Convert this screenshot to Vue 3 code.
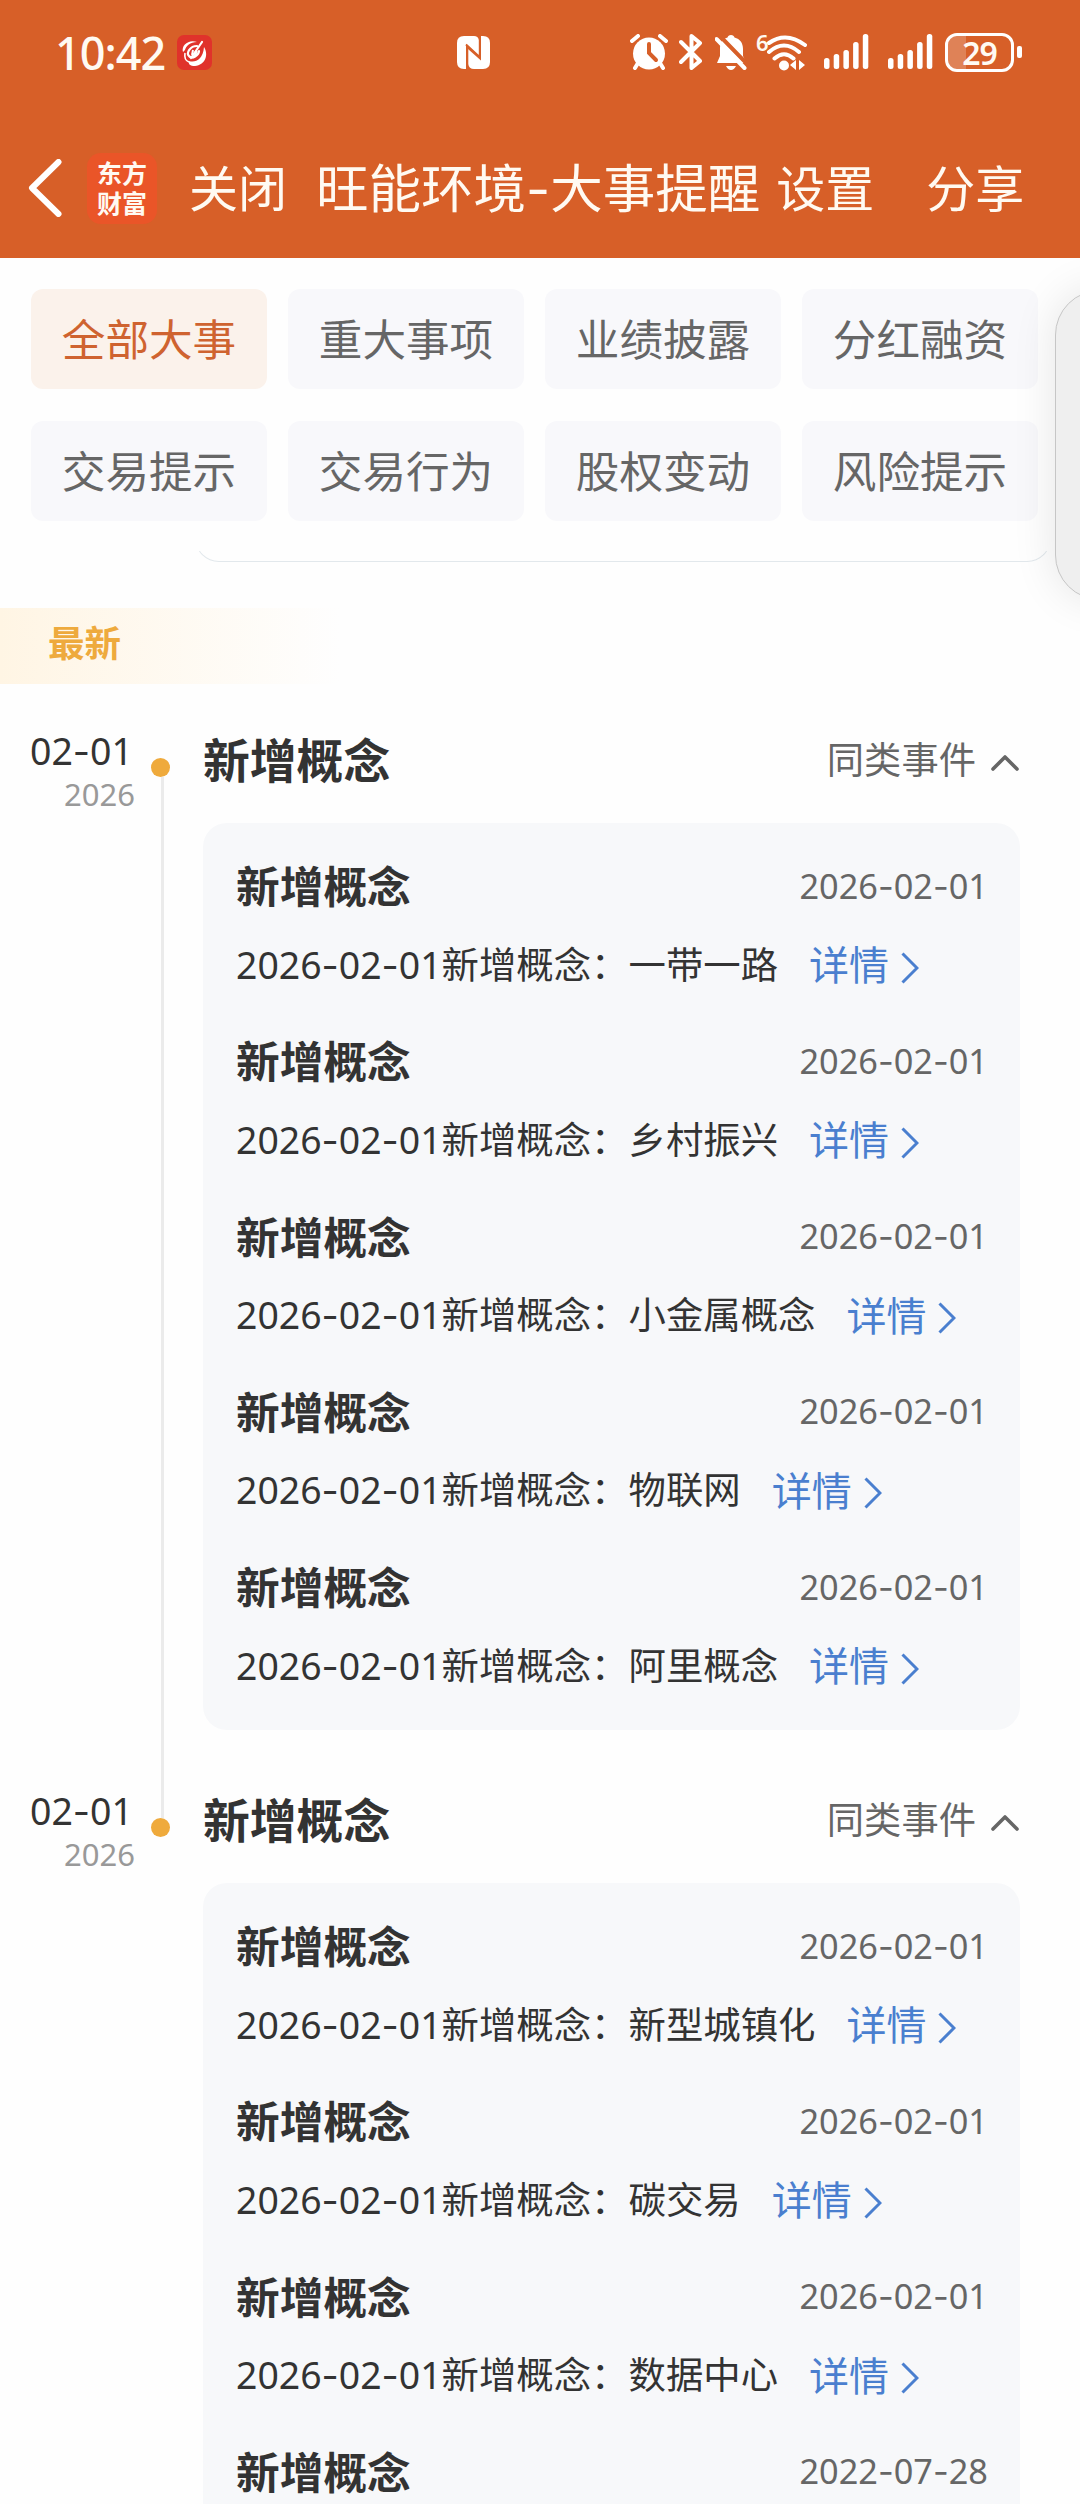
<template>
    <div class="screen">
        <header>
            <div class="status-bar">
                <span class="clock">10:42</span>
                <svg class="app-badge" viewBox="0 0 35 35">
                    <rect width="35" height="35" rx="7" fill="#e0322b" />
                    <path d="M6 17C4 10 12 4 20 7C13 7 9 11 8 15Z" fill="#fff" />
                    <path d="M27 12C32 20 28 30 18 31C13 31 11 29 12 26C18 28 26 25 27 12Z" fill="#fff" />
                    <path d="M8 18C7 24 9 26 12 27" fill="none" stroke="#fff" stroke-width="1.6" />
                    <path d="M25 7L14 23M20 11C13 11 9 18 12 21C15 25 22 20 22 16" fill="none" stroke="#fff" stroke-width="2.2" stroke-linecap="round" />
                    <path d="M16 15L15 20M20 16L17 22" fill="none" stroke="#fff" stroke-width="2" />
                </svg>
                <svg class="nfc" viewBox="0 0 33 33">
                    <path d="M7 0H9V33H7Q0 33 0 26V7Q0 0 7 0Z" />
                    <path d="M26 0H24V33H26Q33 33 33 26V7Q33 0 26 0Z" />
                    <path d="M8.500 0H17Q21 0 22 4V20L9 8Z" />
                    <path d="M11 13L24.500 25V33H17Q12 33 11 28Z" />
                    <path d="M9 8.500L22 20.500M10.300 11V33M22.800 0V22" class="nfc-gap" />
                </svg>
                <div class="status-icons">
                    <svg class="alarm" viewBox="0 0 38 36">
                        <circle cx="19" cy="19.500" r="16" />
                        <path d="M2 7L8 2M36 7L30 2" class="line" />
                        <path d="M8 29L5 34M30 29L33 34" class="line" />
                        <path d="M19 10V19L26 26" class="cut" />
                    </svg>
                    <svg class="bluetooth" viewBox="0 0 24 38">
                        <path d="M2 9L21 28L12.500 35V3L21 10L2 29" class="line" />
                    </svg>
                    <svg class="bell" viewBox="0 0 32 37">
                        <path d="M16 1C18 1 19 2 19.500 3.500C25 5 28 9 28 15V22L31 29H2L5 22V13C6 7 9 4.500 12.500 3.500C13 2 14 1 16 1Z" />
                        <path d="M11 32H21Q19 36 16 36Q13 36 11 32Z" />
                        <path d="M4 1L34 32" class="cut" />
                        <path d="M1.500 5L29.500 34" class="line" />
                    </svg>
                    <div class="wifi">
                        <span class="wifi-gen">6</span>
                        <svg viewBox="0 0 40 37">
                            <circle cx="17" cy="31.500" r="5" />
                            <path d="M2 9Q19 -3 38 11M2 18Q17 5 32 18M7.500 24.500Q17 16 26.500 24.500" class="line" />
                            <path d="M29 26V36L23 31ZM32 26V36L38 31Z" />
                        </svg>
                    </div>
                    <svg v-for="n in 2" :key="n" class="signal" viewBox="0 0 45 36">
                        <rect v-for="bar in signalBars" :key="bar.x" :x="bar.x" :y="35 - bar.h" width="5.500" :height="bar.h" rx="2.500" />
                    </svg>
                    <div class="battery">
                        <div class="battery-body">
                            <div class="battery-fill"></div>
                            <span class="battery-level">29</span>
                        </div>
                        <div class="battery-cap"></div>
                    </div>
                </div>
            </div>
            <nav>
                <svg class="back" viewBox="0 0 34 58">
                    <path d="M30.500 3L4 29L30.500 55" />
                </svg>
                <div class="logo"><span>东方</span><span>财富</span></div>
                <a class="close">关闭</a>
                <h1>旺能环境<i class="dash">-</i>大事提醒</h1>
                <a class="settings">设置</a>
                <a class="share">分享</a>
            </nav>
        </header>

        <div class="tabs">
            <button
                v-for="tab in tabs"
                :key="tab"
                :class="{ active: activeTab === tab }"
                @click="activeTab = tab"
            >
                {{ tab }}
            </button>
        </div>
        <div class="panel-edge"><div class="panel-outline"></div></div>

        <div class="latest">最新</div>

        <main>
            <section v-for="(group, g) in groups" :key="g">
                <div class="when">
                    <div class="day"><DateText value="02-01" /></div>
                    <div class="year">2026</div>
                </div>
                <div class="track">
                    <div class="dot"></div>
                    <div v-if="g < groups.length - 1" class="rail"></div>
                </div>
                <div class="event">
                    <div class="event-head" @click="group.open = !group.open">
                        <h2>新增概念</h2>
                        <span class="similar">同类事件</span>
                        <svg class="arrow-up" :class="{ closed: !group.open }" viewBox="0 0 30 18">
                            <path d="M3 15L15 3L27 15" />
                        </svg>
                    </div>
                    <div v-show="group.open" class="card">
                        <article v-for="(item, i) in group.items" :key="i">
                            <div class="item-head">
                                <h3>新增概念</h3>
                                <DateText class="item-date" :value="item.date" />
                            </div>
                            <p v-if="item.concept">
                                <span><DateText :value="item.date" />新增概念：{{ item.concept }}</span>
                                <a class="detail">详情</a>
                                <svg class="arrow-right" viewBox="0 0 18 32">
                                    <path d="M1.500 1.500L16 16L1.500 30.500" />
                                </svg>
                            </p>
                        </article>
                    </div>
                </div>
            </section>
        </main>

        <div class="side-handle"></div>
    </div>
</template>

<script setup>
import { ref, h } from 'vue';

const tabs = ['全部大事', '重大事项', '业绩披露', '分红融资', '交易提示', '交易行为', '股权变动', '风险提示'];
const activeTab = ref('全部大事');

const signalBars = [
    { x: 0, h: 11 },
    { x: 9.7, h: 15 },
    { x: 19.4, h: 19 },
    { x: 29.1, h: 27 },
    { x: 38.8, h: 35 }
];

const groups = ref([
    {
        open: true,
        items: [
            { date: '2026-02-01', concept: '一带一路' },
            { date: '2026-02-01', concept: '乡村振兴' },
            { date: '2026-02-01', concept: '小金属概念' },
            { date: '2026-02-01', concept: '物联网' },
            { date: '2026-02-01', concept: '阿里概念' }
        ]
    },
    {
        open: true,
        items: [
            { date: '2026-02-01', concept: '新型城镇化' },
            { date: '2026-02-01', concept: '碳交易' },
            { date: '2026-02-01', concept: '数据中心' },
            { date: '2022-07-28', concept: '' }
        ]
    }
]);

// Dates use a wider dash than the digits' own font has
const DateText = (props) => {
    const parts = props.value.split('-');
    return h('span', parts.flatMap((part, i) => (i ? [h('i', { class: 'dash' }, '-'), part] : [part])));
};
DateText.props = ['value'];
</script>

<style>
body {
    background: #fff;
}

.dash {
    font-family: Inter, sans-serif;
    font-style: normal;
    font-weight: 400;
}
</style>

<style scoped>
.screen {
    position: relative;
    width: 1080px;
    height: 2504px;
    overflow: hidden;
    background: #fefefe;
    color: #333;
    font-family: "Noto Sans", "Noto Sans CJK SC", sans-serif;
}

h1, h2, h3, p {
    margin: 0;
}

svg {
    display: block;
    flex: none;
    fill: #fff;
}

header {
    height: 258px;
    background: #d75f28;
    color: #fffaf2;
}

.status-bar {
    display: flex;
    align-items: center;
    height: 104px;
    padding: 0 58px 0 55px;
}

.clock {
    width: 122px;
    font-size: 45px;
    font-weight: 500;
    letter-spacing: -1px;
    white-space: nowrap;
}

.app-badge {
    width: 35px;
    height: 35px;
}

.nfc {
    width: 33px;
    height: 33px;
    margin-left: 245px;
}

.nfc-gap {
    fill: none;
    stroke: #d75f28;
    stroke-width: 2;
}

.line {
    fill: none;
    stroke: #fff;
    stroke-width: 4;
    stroke-linecap: round;
    stroke-linejoin: round;
}

.cut {
    fill: none;
    stroke: #d75f28;
    stroke-width: 4;
    stroke-linecap: round;
}

.status-icons {
    display: flex;
    align-items: center;
    margin-left: auto;
}

.alarm {
    width: 38px;
    height: 36px;
}

.bluetooth {
    width: 24px;
    height: 38px;
    margin-left: 11px;
}

.bell {
    width: 32px;
    height: 37px;
    margin-left: 12px;
}

.wifi {
    display: flex;
    align-items: flex-start;
    width: 51px;
    height: 37px;
    margin-left: 9px;
}

.wifi svg {
    width: 40px;
    height: 37px;
}

.wifi-gen {
    width: 11px;
    font-size: 22px;
    line-height: 16px;
    font-weight: 600;
}

.signal {
    width: 45px;
    height: 36px;
    margin-left: 17px;
}

.signal + .signal {
    margin-left: 19px;
}

.battery {
    display: flex;
    align-items: center;
    gap: 3px;
    margin-left: 12px;
}

.battery-body {
    position: relative;
    box-sizing: border-box;
    width: 69px;
    height: 39px;
    border: 3px solid #fff;
    border-radius: 12px;
    overflow: hidden;
    text-align: center;
}

.battery-fill {
    position: absolute;
    left: 0;
    top: 0;
    width: 29%;
    height: 100%;
    background: rgba(255, 255, 255, 0.22);
}

.battery-level {
    position: relative;
    display: block;
    font-size: 32px;
    line-height: 33px;
    font-weight: 600;
    letter-spacing: -1px;
}

.battery-cap {
    width: 5px;
    height: 12px;
    border-radius: 2px;
    background: #fff;
}

nav {
    display: flex;
    align-items: center;
    height: 154px;
    box-sizing: border-box;
    padding: 14px 0 0 28px;
    font-size: 49px;
    line-height: 72px;
    white-space: nowrap;
}

.back {
    width: 34px;
    height: 58px;
}

.back path {
    fill: none;
    stroke: #fff;
    stroke-width: 6;
    stroke-linecap: round;
    stroke-linejoin: round;
}

.logo {
    display: flex;
    flex-direction: column;
    align-items: center;
    justify-content: center;
    width: 70px;
    height: 71px;
    margin-left: 25px;
    border-radius: 14px;
    background: #ea5528;
    font-size: 25px;
    line-height: 30px;
    font-weight: 700;
}

.close {
    margin-left: 32px;
}

h1 {
    margin-left: 29px;
    font-size: 52.5px;
    font-weight: 400;
}

.settings {
    margin-left: 16px;
}

.share {
    margin-left: 52px;
}

.tabs {
    display: grid;
    grid-template-columns: repeat(4, 236px);
    gap: 32px 21px;
    padding: 31px 0 0 31px;
}

.tabs button {
    height: 100px;
    padding: 0 0 4px;
    border: 0;
    border-radius: 12px;
    background: #f8f8fb;
    color: #666;
    font-family: inherit;
    font-size: 43.6px;
    cursor: pointer;
}

.tabs button.active {
    background: #fbf2eb;
    color: #cf6330;
}

/* Only the lower rim of the filter panel is visible */
.panel-edge {
    display: flex;
    align-items: flex-end;
    width: 856px;
    height: 11px;
    margin: 30px 0 0 195px;
    overflow: hidden;
}

.panel-outline {
    flex: 1;
    height: 60px;
    border-bottom: 1px solid #e2e8ec;
    border-left: 1px solid #e2e8ec;
    border-right: 1px solid #e2e8ec;
    border-radius: 0 0 24px 24px;
}

.latest {
    height: 76px;
    margin-top: 46px;
    padding-left: 48px;
    background: linear-gradient(to right, #fff5e4, #fefefe 340px);
    color: #eeaa3d;
    font-size: 36.5px;
    line-height: 71px;
    font-weight: 700;
}

main {
    padding: 46px 60px 0 0;
}

section {
    display: flex;
    height: 1060px;
}

.when {
    width: 135px;
    text-align: right;
    white-space: nowrap;
}

.day {
    padding-right: 2px;
    font-size: 37.5px;
    line-height: 42px;
}

.year {
    color: #999;
    font-size: 31px;
    line-height: 42px;
}

.track {
    display: flex;
    flex-direction: column;
    align-items: center;
    width: 19px;
    margin: 28px 33px 0 16px;
}

.dot {
    flex: none;
    width: 19px;
    height: 19px;
    border-radius: 50%;
    background: #efaa3c;
}

.rail {
    flex: none;
    width: 3px;
    height: 1041px;
    margin-left: 3px;
    background: #ebebeb;
}

.event {
    flex: 1;
}

.event-head {
    display: flex;
    align-items: center;
    height: 60px;
    margin-bottom: 33px;
    cursor: pointer;
}

h2 {
    flex: 1;
    font-size: 46.8px;
    line-height: 60px;
}

.similar {
    color: #666;
    font-size: 37.3px;
    line-height: 60px;
}

.arrow-up {
    width: 30px;
    height: 18px;
    margin: 5px 0 0 14px;
}

.arrow-up.closed {
    transform: rotate(180deg);
}

.arrow-up path {
    fill: none;
    stroke: #666;
    stroke-width: 3.6;
    stroke-linecap: round;
    stroke-linejoin: round;
}

.card {
    display: flex;
    flex-direction: column;
    gap: 36.3px;
    padding: 33px 32px 33.5px 33px;
    border-radius: 24px;
    background: #f7f8fa;
}

.item-head {
    display: flex;
    align-items: center;
    justify-content: space-between;
    height: 60px;
    margin-bottom: 19px;
}

h3 {
    font-size: 43.7px;
    line-height: 60px;
}

.item-date {
    color: #666;
    font-size: 34.3px;
    line-height: 60px;
}

p {
    display: flex;
    align-items: center;
    height: 60px;
    font-size: 37.4px;
    line-height: 60px;
    white-space: nowrap;
}

.detail {
    margin-left: 31px;
    color: #4a7fcf;
    font-size: 40px;
}

.arrow-right {
    width: 18px;
    height: 32px;
    margin: 5px 0 0 12px;
}

.arrow-right path {
    fill: none;
    stroke: #4a7fcf;
    stroke-width: 3;
}

.side-handle {
    position: absolute;
    left: 1055px;
    top: 290px;
    width: 90px;
    height: 308px;
    border: 1px solid #c6c6c6;
    border-radius: 45px;
    background: #efefef;
    box-shadow: 0 0 44px rgba(0, 0, 0, 0.1);
}
</style>
